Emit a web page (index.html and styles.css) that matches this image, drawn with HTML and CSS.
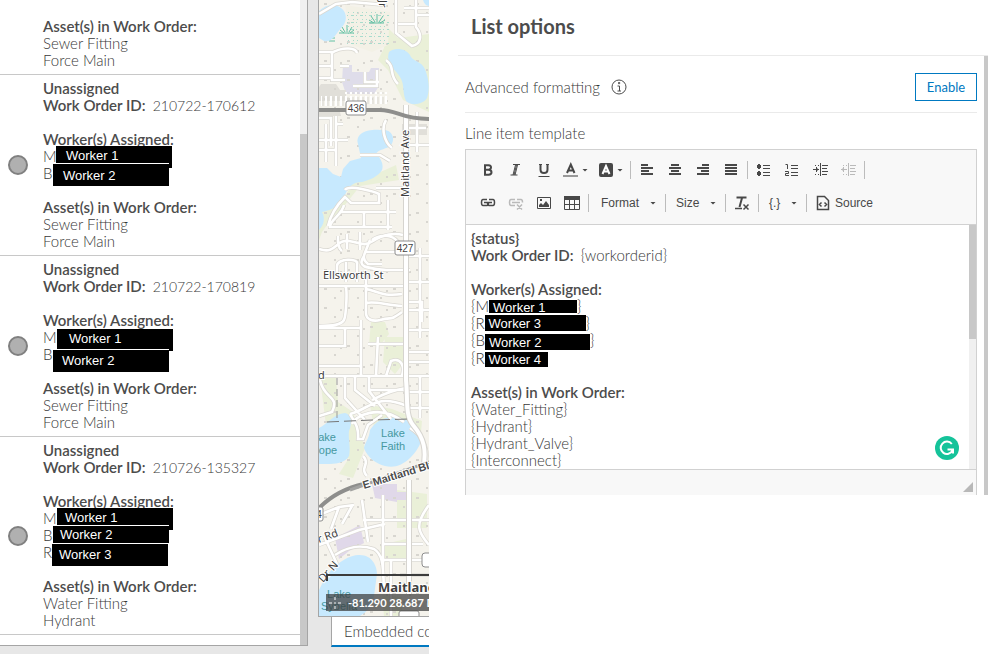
FILE: index.html
```html
<!DOCTYPE html>
<html lang="en">
<head>
<meta charset="utf-8">
<title>List options</title>
<link rel="stylesheet" href="styles.css">
</head>
<body>
<div class="app">
  <section class="preview" aria-label="Dashboard preview">
    <div class="list-panel">
      <ul class="list">
        <li class="item">
          <div class="item-text">
            <p>&nbsp;</p>
            <p><strong>Asset(s) in Work Order:</strong></p>
            <p>Sewer Fitting</p>
            <p>Force Main</p>
          </div>
        </li>
        <li class="item">
          <span class="symbol"></span>
          <div class="item-text">
            <p><strong>Unassigned</strong></p>
            <p><strong>Work Order ID:</strong> <span class="order-id">210722-170612</span></p>
            <p>&nbsp;</p>
            <p><strong>Worker(s) Assigned:</strong></p>
            <p class="worker">M<span class="mask mask-first">Worker 1</span></p>
            <p class="worker">B<span class="mask mask-last">Worker 2</span></p>
            <p>&nbsp;</p>
            <p><strong>Asset(s) in Work Order:</strong></p>
            <p>Sewer Fitting</p>
            <p>Force Main</p>
          </div>
        </li>
        <li class="item">
          <span class="symbol"></span>
          <div class="item-text">
            <p><strong>Unassigned</strong></p>
            <p><strong>Work Order ID:</strong> <span class="order-id">210722-170819</span></p>
            <p>&nbsp;</p>
            <p><strong>Worker(s) Assigned:</strong></p>
            <p class="worker">M<span class="mask mask-first mask-low">Worker 1</span></p>
            <p class="worker">B<span class="mask mask-last mask-low">Worker 2</span></p>
            <p>&nbsp;</p>
            <p><strong>Asset(s) in Work Order:</strong></p>
            <p>Sewer Fitting</p>
            <p>Force Main</p>
          </div>
        </li>
        <li class="item">
          <span class="symbol"></span>
          <div class="item-text">
            <p><strong>Unassigned</strong></p>
            <p><strong>Work Order ID:</strong> <span class="order-id">210726-135327</span></p>
            <p>&nbsp;</p>
            <p><strong>Worker(s) Assigned:</strong></p>
            <p class="worker">M<span class="mask mask-first mask-tight">Worker 1</span></p>
            <p class="worker">B<span class="mask mask-mid">Worker 2</span></p>
            <p class="worker">R<span class="mask mask-last mask-tight">Worker 3</span></p>
            <p>&nbsp;</p>
            <p><strong>Asset(s) in Work Order:</strong></p>
            <p>Water Fitting</p>
            <p>Hydrant</p>
          </div>
        </li>
      </ul>
      <div class="track list-track"><div class="thumb"></div></div>
    </div>

    <div class="map-column">
      <div class="map">
        <svg class="map-art" viewBox="319 0 110 616" preserveAspectRatio="xMinYMin slice" role="img" aria-label="Map of Maitland">
          <defs>
            <pattern id="houses" width="23" height="19" patternUnits="userSpaceOnUse">
              <path d="M2 3h3v2h-3zM12 12h2v2h-2zM18 5h2v2h-2z" fill="#d8d6d0"/>
            </pattern>
            <pattern id="parking" width="5" height="12" patternUnits="userSpaceOnUse">
              <path d="M1 0V10" stroke="#fff" stroke-width="2"/><path d="M3 1V10" stroke="#d9d7d1"/>
            </pattern>
            <pattern id="marsh" width="9" height="7" patternUnits="userSpaceOnUse">
              <path d="M0 1.500h3M5 1.500h1M2 5.500h1M6 5.500h1" stroke="#a9dccd"/>
            </pattern>
            <path id="streets" d="M319 14L336 4 352 2 386 5M396 0V33L412 46C422 44 422 34 416 27V0M398 24h18M404 8h25M416 15h13M319 52h13v28h13M319 66h14M331 53C344 46 356 48 357 53M319 78h13M340 66h9M353 86h24V70M365 72v10h14M386 60C396 68 388 74 398 84M319 118h12v28M326 124v38M336 116v50M336 140h12M319 140h16M336 124h7M386 120c-5 8-2 22 6 28M319 150h16M360 155h20l10 6M406 128h20M417 112v40M407 145h22M383 188h24M345 190c4-6 30 2 34 4v9h-28l-6-6c-8 8-14 16-17 29M340 212h56M344 205c-2 10-14 15-14 22h62M364 212v16M388 200v30M376 188h24M319 249c18 6 16-10 30-8 12 2 15 6 24 0 10-7 22-8 30-6M338 236c0 7 0 12 4 15M347 234v15M360 232v18M370 240c-5 14-10 18-2 24h14M372 240c8-6 20-6 26 2M366 252h34M364 256c-8 12 4 12 22 14h24M337 280v-14c0-8 22-8 20-2v18M346 262v20M319 286h26c3 0 1 30-1 34-3 5-11 6-25 6M366 275v38c0 6 6 9 14 7 14-4 8 2 22-8M366 289c12 2 16 8 36 5M366 303c10-2 20 2 36 3M319 286h87M420 248v90M408 256h21M408 282h21M408 302h14v20M408 310h21M408 330h21M361 320v56M319 328h42M319 346h26v-18M319 366h42M319 376h110M378 337l-2 39M368 344h38M386 376l5-15c10-4 14 5 11 15M369 376v15l22 28M345 376v22l20 22M355 376v14l20 16M369 390h36M372 400c16-8 23-10 34-12M350 414c20-5 25-21 57-8M352 424c3-8 27-21 52-2M320 380c4 20 20 15 12 32l-13 4M350 414c5 9 9 13 8 25h5l5-14 14-10M420 376v42M407 392h22M407 408h22M408 352h21M408 362h21M410 428c16 10 20 25 14 42M363 456c8 8-4 12 4 20M319 515l20-8 15-2M362 500l6 42M319 545l40-15 26-6M339 507l-8 22M352 506l-10 18M383 495v83M363 520h66M383 544h40M384 560h45M429 505c-15 20-11 27 0 40M335 555c15-10 27-10 39-6 10 6 9 20 10 42M385 590h20M391 560v56M400 575h29M324 536l13 28"/>
          </defs>
          <rect x="319" width="110" height="616" fill="#f5f3ec"/>
          <path fill="#eaf0d8" d="M385 25L398 38 429 34V112L403 100 388 70 378 60 384 48ZM319 205L340 206 352 184 385 170 396 165 399 180 360 186 344 206 332 218 322 232 319 240ZM371 322h14l4 12-8 10h-12ZM385 337h18v27l-8 10-12-12ZM320 378l16 0 2 24 15 10 12 36-12 30-14-4 10-16-18 6ZM370 405l22 4 30 12-2 22-10-15-22-8-14 8ZM380 545l26-6v20l-24 4ZM382 595l20 2v19h-18ZM397 490l30 4v34h-30Z"/>
          <path fill="#f3f1e6" d="M345 5L390 12 388 45 372 52 352 45Z"/>
          <path fill="#dfddea" d="M343 65h9v7h17l2-4h8v18l-5 8h-28l-4-12Z"/>
          <path fill="#e0d8e9" d="M335 538l25-13 4 18-15 8-10 8ZM372 484h25v18l-22-4ZM392 492h14v8h-14Z"/>
          <path fill="#e1dfd9" d="M321 84h15l4 6h6v11h-27v-14ZM319 108h20l2 8h-22ZM402 124h25v11h-25Z"/>
          <rect x="319" y="0" width="110" height="616" fill="url(#houses)"/>
          <rect x="346" y="12" width="43" height="34" fill="url(#marsh)"/>
          <path d="M345 92h42v12h-42ZM321 94h23v12h-23Z" fill="url(#parking)"/>
          <path stroke="#62c0a3" fill="none" d="M339 33h15M347 25v7M342 27l3 5M352 27l-3 5M340 30l4 3M354 30l-4 3M369 23h15M377 14v8M371 16l4 6M383 16l-4 6M369 20l5 3M385 20l-5 3M330 38h5M329 41h6"/>
          <g fill="#c7e9fe">
            <path d="M319 11C326 4 336 4 341 8 348 13 347 23 341 28 336 34 332 43 324 41L319 38Z"/>
            <path d="M389 52C394 47 406 48 410 55 413 63 423 60 426 72 430 84 429 92 427 98 423 105 410 106 406 101 402 92 405 85 400 77 396 70 385 64 389 52Z"/>
            <path d="M423 0h6v6C426 6 424 3 423 0Z"/>
            <path d="M358 144C355 133 368 129 380 130 392 128 396 139 391 145 388 149 378 149 376 154 381 158 384 165 382 170 378 177 369 180 362 182 353 182 349 186 345 195 340 205 333 210 322 212 326 219 323 226 319 230V168H327L333 174 341 177 343 169 350 161 361 158Z"/>
            <path d="M319 428C328 424 333 414 345 413 351 414 353 422 349 431 348 439 351 448 349 456 344 465 331 464 319 464Z"/>
            <path d="M370 430C375 422 384 417 392 417 404 416 414 424 420 432 424 440 418 450 411 457 402 466 394 468 385 466 376 464 367 457 364 448 366 440 369 439 370 430Z"/>
            <path d="M324 580C331 569 344 556 358 555 372 554 377 566 377 574L374 596C373 605 367 612 360 616H319V590Z"/>
          </g>
          <use href="#streets" fill="none" stroke="#dad8d2" stroke-width="4"/>
          <use href="#streets" fill="none" stroke="#fff" stroke-width="2.600"/>
          <path fill="none" stroke="#d6d4cf" stroke-width="6" d="M406 105V380C408 400 405 415 413 425 424 438 427 450 423 470M409 480V594"/>
          <path fill="none" stroke="#fff" stroke-width="4" d="M406 105V380C408 400 405 415 413 425 424 438 427 450 423 470M409 480V594"/>
          <path fill="none" stroke="#8e8e8c" stroke-width="4" d="M319 110H380C398 110 400 119 429 119M319 508C333 494 350 487 364 484"/>
          <path fill="none" stroke="#a2a2a0" stroke-width="3" d="M350 490L429 462"/>
          <path fill="none" stroke="#777" stroke-dasharray="12 5" d="M327 422L372 420 410 419"/>
          <path fill="none" stroke="#999" stroke-dasharray="7 4" d="M337 378V420"/>
          <g fill="#fff" stroke="#8d8d8d">
            <rect x="346" y="101" width="20" height="14" rx="2"/>
            <rect x="395" y="241" width="20" height="14" rx="2"/>
            <rect x="312" y="507" width="11" height="14" rx="2"/>
            <rect x="422" y="553" width="12" height="14" rx="3"/>
            <rect x="399" y="611" width="20" height="14" rx="2"/>
          </g>
          <g class="shield-text"><text x="356" y="112">436</text><text x="405" y="252">427</text><text x="319" y="518">4</text></g>
          <g class="street-text">
            <text x="323" y="279">Ellsworth St</text>
            <text transform="translate(409 197) rotate(-90)">Maitland Ave</text>
            <text transform="translate(379 0) rotate(90)">Jr</text>
            <text x="318" y="379">d</text>
            <text transform="translate(319 543) rotate(-20)">r Rd</text>
            <text transform="translate(323 583) rotate(-48)">Dr N</text>
          </g>
          <text class="road-text" transform="translate(364 489) rotate(-17)">E Maitland Blvd</text>
          <g class="lake-text">
            <text x="393" y="437">Lake</text><text x="393" y="450">Faith</text>
            <text x="327" y="441">ake</text><text x="328" y="454">ope</text>
            <text x="339" y="598">Lake</text><text x="339" y="610">Sybelia</text>
          </g>
          <text class="city-text" x="378" y="592">Maitland</text>
          <path d="M327 581V575H429" fill="none" stroke="#3c3c3c" stroke-width="2"/>
        </svg>
        <div class="coords">
          <svg class="crosshair" viewBox="0 0 14 14" aria-hidden="true"><path d="M7 1v3M7 10v3M1 7h3M10 7h3M6 7h2"/></svg>
          <span>-81.290 28.687 Degrees</span>
        </div>
      </div>
      <div class="tabs"><button class="tab" type="button">Embedded content</button></div>
    </div>
  </section>

  <main class="options">
    <h1>List options</h1>
    <div class="options-body">
      <div class="form">
        <div class="row">
          <span>Advanced formatting</span>
          <svg class="info" viewBox="0 0 16 16" aria-hidden="true"><circle cx="8" cy="8" r="7"/><path d="M6.500 7H8.500V12M6.500 12H10"/><path d="M7.500 3.500h1.200v1.200H7.500z"/></svg>
          <button class="enable" type="button">Enable</button>
        </div>
        <h2 id="template-label">Line item template</h2>
        <div class="editor">
          <div class="toolbar" role="toolbar" aria-label="Formatting">
            <div class="tools">
              <button class="tool" type="button" aria-label="Bold"><svg viewBox="0 0 16 16"><path class="w2" d="M5 3v10M4 3.200h4.500q2.800.3 2.500 2.500-.3 2-2.500 2H5M8.500 7.800q3 .3 3 2.500t-3 2.500H4"/></svg></button>
              <button class="tool" type="button" aria-label="Italic"><svg viewBox="0 0 16 16"><path d="M5 2.500h7M2.500 13h7M7.500 3L5 13M8.500 3L6 13M9.500 3L7 13"/></svg></button>
              <button class="tool" type="button" aria-label="Underline"><svg viewBox="0 0 16 16"><path class="w2" d="M4.500 2v5.500q0 3.500 3.500 3.500t3.500-3.500V2"/><path d="M2.500 14.500h11M3 2.500h3M10 2.500h3"/></svg></button>
              <button class="tool drop" type="button" aria-label="Text color"><svg viewBox="0 0 16 16"><path class="w2" d="M4 11L7.800 2.500 11.500 11M5.500 8.500h5"/><path class="faint w2" d="M0 14h15"/></svg><i class="caret"></i></button>
              <button class="tool drop" type="button" aria-label="Background color"><svg viewBox="0 0 16 16"><rect class="solid" x="1" y="1" width="14" height="14" rx="2"/><path class="white" d="M4.500 12L8 4 11.500 12M6 9.500h4"/></svg><i class="caret"></i></button>
              <i class="sep"></i>
              <button class="tool" type="button" aria-label="Align left"><svg viewBox="0 0 16 16"><path class="w2" d="M2 3h7M2 6h12M2 9h8M2 12h12"/></svg></button>
              <button class="tool" type="button" aria-label="Center"><svg viewBox="0 0 16 16"><path class="w2" d="M4 3h8M2 6h12M4 9h8M2 12h12"/></svg></button>
              <button class="tool" type="button" aria-label="Align right"><svg viewBox="0 0 16 16"><path class="w2" d="M7 3h7M2 6h12M6 9h8M2 12h12"/></svg></button>
              <button class="tool" type="button" aria-label="Justify"><svg viewBox="0 0 16 16"><path class="w2" d="M2 3h12M2 6h12M2 9h12M2 12h12"/></svg></button>
              <i class="sep"></i>
              <button class="tool" type="button" aria-label="Bulleted list"><svg viewBox="0 0 16 16"><path class="solid" d="M1 3h4v3H1zM2 2h2v5H2zM1 10h4v3H1zM2 9h2v5H2z"/><path d="M7 3.500h7M7 6.500h7M7 10.500h7M7 13.500h7"/></svg></button>
              <button class="tool" type="button" aria-label="Numbered list"><svg viewBox="0 0 16 16"><path d="M1.500 2.500H3.500V7M1 9.500H4.500V11.500H1.500V13.500H5M7 3.500h7M7 6.500h7M7 10.500h7M7 13.500h7"/></svg></button>
              <button class="tool" type="button" aria-label="Increase indent"><svg viewBox="0 0 16 16"><path d="M8.500 1v13M1 7.500h6M4.500 5v5M5.500 6.500v2M3 3.500h1M6 3.500h1M3 12.500h1M6 12.500h1M10 3.500h6M10 6.500h5M10 9.500h6M10 12.500h5"/></svg></button>
              <button class="tool" type="button" disabled aria-label="Decrease indent"><svg viewBox="0 0 16 16"><path d="M8.500 1v13M1 7.500h6M3.500 5v5M2.500 6.500v2M3 3.500h1M6 3.500h1M3 12.500h1M6 12.500h1M10 3.500h6M10 6.500h5M10 9.500h6M10 12.500h5"/></svg></button>
              <i class="sep"></i>
            </div>
            <div class="tools">
              <button class="tool" type="button" aria-label="Link"><svg viewBox="0 0 16 16"><path class="link" d="M7 4.500H3Q1.500 4.500 1.500 7.500T3 10.500H7Q8.500 10.500 8.500 7.500M9 4.500H13Q14.500 4.500 14.500 7.500T13 10.500H9Q7.500 10.500 7.500 7.500M4 7.500h8"/></svg></button>
              <button class="tool" type="button" disabled aria-label="Unlink"><svg viewBox="0 0 16 16"><path class="link" d="M7 4.500H3Q1.500 4.500 1.500 7.500T3 10.500H7M9 4.500H13Q14.500 4.500 14.500 7.500M4 7.500h8M9 9.500l5 5M14 9.500l-5 5"/></svg></button>
              <button class="tool" type="button" aria-label="Image"><svg viewBox="0 0 16 16"><path d="M1.500 2.500h13v11h-13z"/><path class="solid" d="M3 12v-2l2-2 2 2 3-4 3 4v2zM4 4h2v2H4z"/></svg></button>
              <button class="tool" type="button" aria-label="Table"><svg viewBox="0 0 16 16"><path class="solid" d="M0 1h16v4H0z"/><path d="M.5 1.500h15v13H.5zM.5 9.500h15M5.500 5v9M10.500 5v9"/></svg></button>
              <i class="sep"></i>
              <button class="combo combo-format" type="button"><span>Format</span><i class="caret"></i></button>
              <i class="sep"></i>
              <button class="combo combo-size" type="button"><span>Size</span><i class="caret"></i></button>
              <i class="sep"></i>
              <button class="tool" type="button" aria-label="Remove format"><svg viewBox="0 0 16 16"><path class="w2" d="M2.500 2.500h10M8 3L5.500 12"/><path class="link" d="M1 13.500h7M9.500 9.500l5 5M14.500 9.500l-5 5"/></svg></button>
              <i class="sep"></i>
              <button class="combo combo-field" type="button"><span>{.}</span><i class="caret"></i></button>
              <i class="sep"></i>
              <button class="source" type="button"><svg viewBox="0 0 16 16"><path class="link" d="M2.500 1.500h7l4 4v9h-11zM6.500 7.500l-2 2 2 2M9.500 7.500l2 2-2 2"/></svg><span>Source</span></button>
            </div>
          </div>
          <div class="content">
            <div class="text" contenteditable="true" spellcheck="false" role="textbox" aria-multiline="true" aria-labelledby="template-label">
              <p><strong>{status}</strong></p>
              <p><strong>Work Order ID:</strong> {workorderid}</p>
              <p>&nbsp;</p>
              <p><strong>Worker(s) Assigned:</strong></p>
              <p class="field">{M<span class="bar bar-a">Worker 1</span>}</p>
              <p class="field">{R<span class="bar bar-b">Worker 3</span>}</p>
              <p class="field">{B<span class="bar bar-c">Worker 2</span>}</p>
              <p class="field">{R<span class="bar bar-d">Worker 4</span></p>
              <p>&nbsp;</p>
              <p><strong>Asset(s) in Work Order:</strong></p>
              <p>{Water_Fitting}</p>
              <p>{Hydrant}</p>
              <p>{Hydrant_Valve}</p>
              <p>{Interconnect}</p>
            </div>
            <div class="track"><div class="thumb"></div></div>
            <svg class="checker" viewBox="0 0 24 24" aria-hidden="true"><circle cx="12" cy="12" r="12"/><path d="M16.800 8A6.200 6.200 0 1 0 17.500 14.500M12.500 13.500H18V17.500"/></svg>
          </div>
          <div class="footer"><svg class="grip" viewBox="0 0 10 10" aria-hidden="true"><path d="M10 0v10H0z"/></svg></div>
        </div>
      </div>
      <div class="thumb page-thumb"></div>
    </div>
  </main>
</div>
</body>
</html>
```

FILE: styles.css
```css
* { box-sizing: border-box; }
body, p, h1, h2, ul { margin: 0; padding: 0; }
body {
  background: #fff;
  color: #383838;
  font: 300 15px/17px Lato, "Liberation Sans", sans-serif;
}
strong { margin-right: 3px; font-weight: 600; color: #4c4c4c; }
button { font: inherit; color: inherit; background: none; border: 0; padding: 0; margin: 0; }
i { display: block; }

.app { display: grid; grid-template-columns: 429fr 567fr; height: 100vh; }

/* Dashboard preview */
.preview {
  display: grid;
  grid-template-columns: 308fr 111fr;
  column-gap: 10px;
  min-width: 0;
  overflow: hidden;
  background: #e7e7e7;
}
.list-panel {
  display: flex;
  min-height: 0;
  margin-bottom: 8px;
  overflow: hidden;
  background: #fff;
  border: solid #a5a5a5;
  border-width: 0 1px 1px 0;
}
.list {
  flex: 1;
  display: flex;
  flex-direction: column;
  justify-content: flex-end;
  padding-bottom: 10px;
  list-style: none;
}
.item {
  display: flex;
  flex-shrink: 0;
  align-items: center;
  padding: 5px 0 5px 8px;
  border-bottom: 1px solid #c8c8c8;
}
.item-text { margin-left: auto; width: calc(100% - 35px); }
.item p { height: 17px; }
.order-id { font-size: 14px; }
.symbol {
  width: 20px;
  height: 20px;
  border: 2px solid #808080;
  border-radius: 50%;
  background: #b0b0b0;
}
.worker { position: relative; }
.mask {
  position: absolute;
  left: 10px;
  top: -2px;
  width: 116px;
  height: 22px;
  padding-left: 10px;
  background: #000;
  color: #fff;
  font: 13px/22px "Liberation Sans", sans-serif;
}
.mask-first { left: 13px; line-height: 20px; }
.mask-mid { height: 18px; line-height: 18px; padding-left: 7px; border-top: 1px solid #fff; }
.mask-last { top: -1px; line-height: 24px; box-shadow: 0 -1px #fff; }
.mask-low { left: 14px; top: 0; padding-left: 12px; }
.mask-last.mask-low { left: 10px; top: 4px; padding-left: 9px; line-height: 22px; }
.mask-tight { left: 14px; padding-left: 8px; }
.mask-last.mask-tight { left: 9px; top: 0; padding-left: 7px; line-height: 22px; }

.track { width: 7px; flex: none; background: #f0f0f0; }
.thumb { background: #c8c8c8; height: 114px; }
.list-track { padding-top: 134px; }
.list-track .thumb { height: 100%; }

.map-column { display: flex; flex-direction: column; min-width: 0; }
.map {
  position: relative;
  flex: 1;
  min-height: 0;
  overflow: hidden;
  border: solid #a5a5a5;
  border-width: 0 0 1px 1px;
}
.map-art { display: block; width: 100%; height: 100%; }
.map-art text { font-family: "Liberation Sans", sans-serif; }
.map-art .street-text text, .map-art .city-text { font-family: "Noto Sans", sans-serif; }
.shield-text { font-size: 10px; font-weight: 400; text-anchor: middle; fill: #444; }
.street-text { font-size: 11px; font-weight: 400; fill: #3f3f3f; stroke: #fff; stroke-width: 2px; paint-order: stroke; }
.road-text { font-size: 11px; font-weight: 700; fill: #4c4c4c; stroke: #fff; stroke-width: 2px; paint-order: stroke; }
.lake-text { font-size: 11px; font-weight: 400; text-anchor: middle; fill: #4598a0; }
.city-text { font-size: 13px; font-weight: 700; fill: #3f3f3f; stroke: #fff; stroke-width: 2px; paint-order: stroke; }
.coords {
  position: absolute;
  left: 7px;
  right: 0;
  bottom: 5px;
  display: flex;
  align-items: center;
  gap: 6px;
  height: 17px;
  padding-left: 2px;
  overflow: hidden;
  white-space: nowrap;
  background: rgba(60, 60, 60, .72);
  color: #fff;
  font-size: 11px;
  font-weight: 700;
}
.crosshair { width: 14px; height: 14px; flex: none; fill: none; stroke: #fff; }
.tabs { height: 37px; padding: 0 0 7px 13px; }
.tab {
  display: block;
  width: 100%;
  height: 30px;
  padding-left: 12px;
  overflow: hidden;
  white-space: nowrap;
  text-align: left;
  background: #fff;
  border: solid #a5a5a5;
  border-width: 0 0 0 1px;
  border-bottom: 2px solid #0079c1;
}

/* Options panel */
.options { padding: 0 8px 0 29px; min-width: 0; }
h1 {
  height: 56px;
  padding: 14px 13px;
  border-bottom: 1px solid #eaeaea;
  color: #4c4c4c;
  font-size: 20px;
  line-height: 24px;
  font-weight: 700;
}
.options-body { display: flex; justify-content: space-between; }
.form { flex: 1; padding: 0 7px; min-width: 0; }
.page-thumb { width: 4px; height: auto; }
.row {
  display: flex;
  align-items: center;
  gap: 11px;
  height: 57px;
  padding-top: 6px;
  border-bottom: 1px solid #eaeaea;
}
.info { width: 16px; height: 16px; fill: none; stroke: #4c4c4c; }
.enable {
  margin-left: auto;
  width: 62px;
  height: 28px;
  border: 1px solid #0079c1;
  color: #0079c1;
  font-size: 13px;
  font-weight: 400;
}
h2 { height: 36px; padding-top: 12px; font-size: 15px; line-height: 17px; font-weight: 300; }
.editor { border: 1px solid #d1d1d1; border-bottom: 0; background: #f8f8f8; }
.toolbar {
  display: grid;
  gap: 5px;
  padding: 6px 8px 7px;
  font: 12px/16px "Liberation Sans", sans-serif;
  color: #484848;
  border-bottom: 1px solid #d1d1d1;
}
.tools { display: flex; align-items: center; height: 28px; }
.tool, .source, .combo { display: flex; align-items: center; height: 28px; padding: 0 6px; }
.tool:disabled { opacity: .35; }
.tool svg, .source svg { display: block; width: 16px; height: 16px; flex: none; fill: none; stroke: #484848; }
.tool .w2 { stroke-width: 2; }
.link { stroke-width: 1.5; }
.tool .solid { fill: #484848; stroke: none; }
.tool .faint { stroke: #999; }
.tool .white { stroke: #fff; stroke-width: 2; }
.drop { width: 35px; padding: 0 5px; gap: 3px; }
.caret { width: 6px; height: 3px; background: #484848; clip-path: polygon(0 0, 100% 0, 50% 100%); }
.sep { width: 1px; height: 18px; margin: 0 2px; background: #bcbcbc; }
.combo { justify-content: space-between; padding: 0 7px 0 8px; }
.combo-format { width: 72px; padding-left: 10px; }
.combo-size { width: 55px; }
.combo-field { width: 43px; }
.source { gap: 4px; }

.content { position: relative; display: flex; height: 245px; background: #fff; border-bottom: 1px solid #d1d1d1; }
.text { flex: 1; padding: 5px 5px 0; overflow: hidden; outline: 0; }
.field { display: flex; }
.bar {
  width: 88px;
  height: 13px;
  margin-top: 2px;
  padding-left: 4px;
  background: #000;
  color: #fff;
  font: 13px/16px "Liberation Sans", sans-serif;
}
.bar-b { width: 101px; height: 16px; margin-top: 0; line-height: 18px; }
.bar-c { width: 105px; height: 16px; line-height: 17px; }
.bar-d { width: 63px; height: 15px; }
.checker { position: absolute; right: 17px; bottom: 9px; width: 24px; height: 24px; fill: #15c39a; }
.checker path { fill: none; stroke: #fff; stroke-width: 2; }
.footer { display: flex; justify-content: flex-end; align-items: flex-end; height: 25px; padding: 3px; }
.grip { width: 10px; height: 10px; fill: #b8b8b8; }
```
